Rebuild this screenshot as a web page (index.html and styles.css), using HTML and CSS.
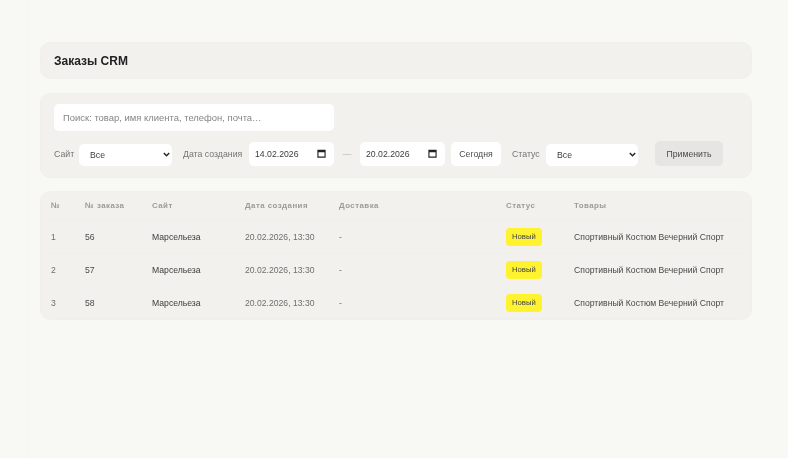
FILE: index.html
```html
<!DOCTYPE html>
<html lang="ru">
<head>
<meta charset="utf-8">
<title>Заказы CRM</title>
<link rel="stylesheet" href="styles.css">
</head>
<body>
<main class="page">
  <header class="card title-card"><h1>Заказы CRM</h1></header>
  <section class="card filters">
    <input class="search" type="text" placeholder="Поиск: товар, имя клиента, телефон, почта…">
    <div class="filter-row">
      <label class="lbl lbl-site">Сайт</label>
      <select class="sel sel-site"><option>Все</option></select>
      <label class="lbl lbl-date">Дата создания</label>
      <div class="date"><span>14.02.2026</span><svg viewBox="0 0 12 12" width="9" height="9"><path fill="#222" fill-rule="evenodd" d="M0.5 1h11v10.5H0.5zM2 4.2v5.8h8V4.2z"/></svg></div>
      <span class="dash">—</span>
      <div class="date"><span>20.02.2026</span><svg viewBox="0 0 12 12" width="9" height="9"><path fill="#222" fill-rule="evenodd" d="M0.5 1h11v10.5H0.5zM2 4.2v5.8h8V4.2z"/></svg></div>
      <button class="today" type="button">Сегодня</button>
      <label class="lbl lbl-status">Статус</label>
      <select class="sel sel-status"><option>Все</option></select>
      <button class="apply" type="button">Применить</button>
    </div>
  </section>
  <section class="card table-card">
    <table>
      <thead>
        <tr><th class="c1">№</th><th class="c2">№ заказа</th><th class="c3">Сайт</th><th class="c4">Дата создания</th><th class="c5">Доставка</th><th class="c6">Статус</th><th class="c7">Товары</th></tr>
      </thead>
      <tbody>
        <tr><td class="muted">1</td><td class="num">56</td><td class="dark">Марсельеза</td><td class="muted">20.02.2026, 13:30</td><td class="muted">-</td><td><span class="badge">Новый</span></td><td class="goods">Спортивный Костюм Вечерний Спорт</td></tr>
        <tr><td class="muted">2</td><td class="num">57</td><td class="dark">Марсельеза</td><td class="muted">20.02.2026, 13:30</td><td class="muted">-</td><td><span class="badge">Новый</span></td><td class="goods">Спортивный Костюм Вечерний Спорт</td></tr>
        <tr><td class="muted">3</td><td class="num">58</td><td class="dark">Марсельеза</td><td class="muted">20.02.2026, 13:30</td><td class="muted">-</td><td><span class="badge">Новый</span></td><td class="goods">Спортивный Костюм Вечерний Спорт</td></tr>
      </tbody>
    </table>
  </section>
</main>
</body>
</html>
```

FILE: styles.css
```css
* { box-sizing: border-box; }
html, body { margin: 0; height: 100%; }
body {
  background: linear-gradient(90deg, transparent 25px, #f7f7f3 25px, #f7f7f3 31px, transparent 31px), #f8f8f4;
  font-family: "Liberation Sans", Arial, sans-serif;
  color: #333;
  overflow: hidden;
}
.page {
  width: 788px;
  height: 458px;
  padding: 42px 36px 0 40px;
  display: flex;
  flex-direction: column;
  filter: blur(0.3px);
}
.card {
  background: #f2f1ee;
  border: 1px solid #f0efec;
  border-radius: 10px;
}
.title-card {
  height: 37px;
  padding: 0 13px;
  display: flex;
  align-items: center;
  margin-bottom: 14px;
}
h1 { margin: 0; font-size: 12px; font-weight: 700; color: #222; }
.filters {
  height: 85px;
  padding: 10px 13px 0;
  margin-bottom: 13px;
}
.search {
  display: block;
  width: 280px;
  height: 27px;
  border: 0;
  border-radius: 5px;
  background: #fff;
  padding: 0 9px;
  font: 9.45px "Liberation Sans", Arial, sans-serif;
  outline: none;
}
.search::placeholder { color: #858585; opacity: 1; }
.filter-row {
  display: flex;
  align-items: center;
  height: 25px;
  margin-top: 10px;
}
.lbl { font-size: 8.75px; color: #747472; }
.lbl-site { width: 25px; margin-top: 1px; }
.lbl-date { margin-left: 11px; width: 66px; white-space: nowrap; }
.lbl-status { margin-left: 11px; width: 34px; margin-top: 1px; }
.sel {
  appearance: none;
  height: 22px;
  border: 0;
  border-radius: 5px;
  background: #fff url("data:image/svg+xml,%3Csvg xmlns='http://www.w3.org/2000/svg' width='7' height='5' viewBox='0 0 7 5'%3E%3Cpath d='M.8 1l2.7 2.7L6.2 1' fill='none' stroke='%23222' stroke-width='1.4'/%3E%3C/svg%3E") no-repeat right 2px center;
  font: 8.7px "Liberation Sans", Arial, sans-serif;
  color: #3c3c3c;
  padding: 0 0 0 11px;
  margin-top: 2px;
  outline: none;
}
.sel-site { width: 93px; }
.sel-status { width: 92px; }
.date {
  width: 85px;
  height: 24px;
  background: #fff;
  border-radius: 5px;
  display: flex;
  align-items: center;
  justify-content: space-between;
  padding: 0 8px 0 6px;
  font-size: 8.7px;
  color: #3c3c3c;
}
.dash { width: 26px; text-align: center; font-size: 8.7px; color: #bbb; }
.today {
  width: 50px;
  height: 24px;
  margin-left: 6px;
  border: 0;
  border-radius: 5px;
  background: #fff;
  font: 8.7px "Liberation Sans", Arial, sans-serif;
  color: #4a4a4a;
  padding: 0;
}
.apply {
  width: 68px;
  height: 25px;
  margin-left: 17px;
  border: 0;
  border-radius: 5px;
  background: #e6e5e3;
  font: 8.7px "Liberation Sans", Arial, sans-serif;
  color: #4a4a4a;
  padding: 0;
}
table { width: 100%; border-collapse: collapse; table-layout: fixed; }
th {
  height: 28px;
  padding: 0 0 0 10px;
  text-align: left;
  font-size: 7.9px;
  font-weight: 700;
  letter-spacing: 0.45px;
  color: #9b9b98;
}
td {
  height: 33px;
  padding: 0 0 0 10px;
  font-size: 8.65px;
  border-top: 1px solid #f0efec;
  white-space: nowrap;
}
.c1 { width: 34px; }
.c2 { width: 67px; }
.c3 { width: 93px; }
.c4 { width: 94px; }
.c5 { width: 167px; }
.c6 { width: 68px; }
.muted { color: #6f6f6f; }
.num { color: #4a4a4a; }
.dark { color: #3c3c3c; }
.goods { color: #4a4a4a; }
.badge {
  display: inline-block;
  padding: 3px 6px;
  height: 18px;
  line-height: 12px;
  font-size: 7.7px;
  color: #444;
  background: #fff22e;
  border-radius: 4px;
  vertical-align: middle;
}
```
